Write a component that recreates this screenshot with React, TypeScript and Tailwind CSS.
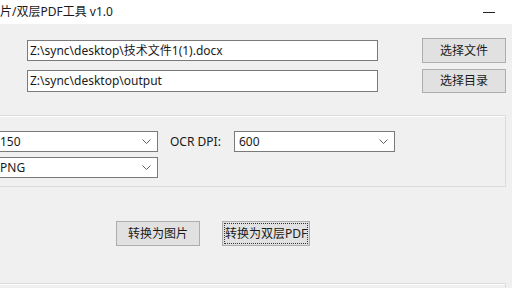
const font = { fontFamily: '"Segoe UI", "Noto Sans", "Noto Sans CJK SC", sans-serif' };

const Chevron = () => (
  <svg width="9" height="5" viewBox="0 0 9 5" className="shrink-0">
    <path d="M0.5 0.5 L4.5 4.5 L8.5 0.5" fill="none" stroke="#606060" strokeWidth="1" />
  </svg>
);

const TextBox = ({ value, h }: { value: string; h: string }) => (
  <div className={`w-[351px] ${h} bg-white border border-[#7a7a7a] flex items-center pl-[2px] text-[12px] text-[#1a1a1a] whitespace-nowrap overflow-hidden`}>
    {value}
  </div>
);

const Combo = ({ value, w }: { value: string; w: string }) => (
  <div className={`${w} h-[21px] bg-white border border-[#7a7a7a] flex items-center justify-between pl-[4px] pr-[6px] text-[12px] text-[#1a1a1a]`}>
    <span>{value}</span>
    <Chevron />
  </div>
);

const WinButton = ({ label, w, h, focus }: { label: string; w: string; h: string; focus?: boolean }) => (
  <div className={`${w} ${h} bg-[#e1e1e1] border border-[#adadad] flex items-center justify-center text-[12px] text-[#1a1a1a] p-[1px] whitespace-nowrap`}>
    <div className={`w-full h-full flex items-center justify-center ${focus ? 'border border-dotted border-[#333]' : ''}`}>
      {label}
    </div>
  </div>
);

export default function App() {
  return (
    <div className="w-[512px] h-[288px] overflow-hidden bg-[#f0f0f0] flex flex-col" style={font}>
      {/* title bar */}
      <div className="h-[24px] bg-white flex items-center justify-between text-[12px] text-[#1a1a1a] shrink-0">
        <span className="whitespace-nowrap">片/双层PDF工具 v1.0</span>
        <div className="w-[12px] h-[1px] bg-[#222] mr-[17px]" />
      </div>

      {/* path rows */}
      <div className="flex items-center pl-[27px] mt-[14px]">
        <TextBox value="Z:\sync\desktop\技术文件1(1).docx" h="h-[21px]" />
        <div className="ml-[44px]">
          <WinButton label="选择文件" w="w-[84px]" h="h-[25px]" />
        </div>
      </div>
      <div className="flex items-center pl-[27px] mt-[6px]">
        <TextBox value="Z:\sync\desktop\output" h="h-[22px]" />
        <div className="ml-[44px]">
          <WinButton label="选择目录" w="w-[84px]" h="h-[24px]" />
        </div>
      </div>

      {/* options group */}
      <div className="mt-[22px] -ml-[6px] w-[512px] h-[72px] border border-[#dcdcdc] shadow-[inset_1px_1px_0_#ffffff] pt-[15px] shrink-0">
        <div className="flex items-center">
          <Combo value="150" w="w-[163px]" />
          <span className="ml-[12px] w-[64px] text-[12px] text-[#1a1a1a]">OCR DPI:</span>
          <Combo value="600" w="w-[161px]" />
        </div>
        <div className="flex mt-[5px]">
          <Combo value="PNG" w="w-[163px]" />
        </div>
      </div>

      {/* actions */}
      <div className="flex mt-[34px] pl-[116px] gap-[22px]">
        <WinButton label="转换为图片" w="w-[84px]" h="h-[25px]" />
        <WinButton label="转换为双层PDF" w="w-[88px]" h="h-[25px]" focus />
      </div>

      <div className="mt-[37px] -ml-[6px] w-[512px] h-[10px] border border-[#dcdcdc] shadow-[inset_1px_1px_0_#ffffff] shrink-0" />
    </div>
  );
}
